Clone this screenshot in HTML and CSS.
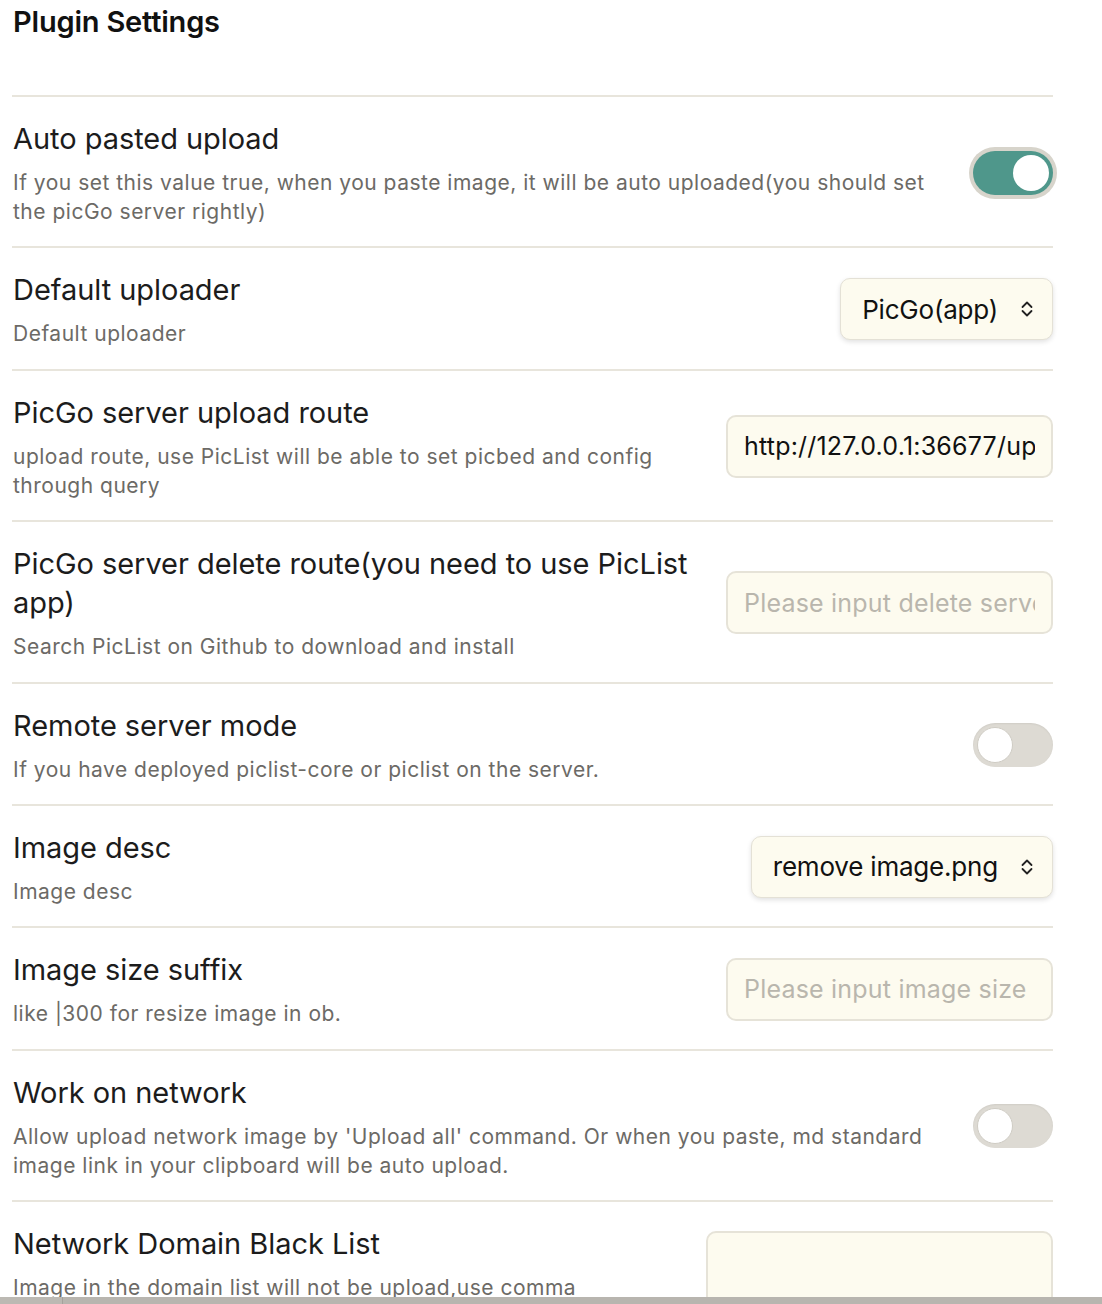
FILE: index.html
```html
<!DOCTYPE html>
<html>
<head>
<meta charset="utf-8">
<link rel="stylesheet" href="styles.css">
</head>
<body>
<div class="page">
  <h1 class="title">Plugin Settings</h1>

  <div class="setting">
    <div class="info">
      <div class="name">Auto pasted upload</div>
      <div class="desc">If you set this value true, when you paste image, it will be auto uploaded(you should set the picGo server rightly)</div>
    </div>
    <div class="control"><div class="toggle on"><span class="knob"></span></div></div>
  </div>

  <div class="setting">
    <div class="info">
      <div class="name">Default uploader</div>
      <div class="desc">Default uploader</div>
    </div>
    <div class="control">
      <div class="select"><span>PicGo(app)</span>
        <svg class="chev" width="14" height="20" viewBox="0 0 14 20"><path d="M2.5 8 L7 3.5 L11.5 8 M2.5 12 L7 16.5 L11.5 12" fill="none" stroke="#222" stroke-width="1.8" stroke-linecap="round" stroke-linejoin="round"/></svg>
      </div>
    </div>
  </div>

  <div class="setting">
    <div class="info">
      <div class="name">PicGo server upload route</div>
      <div class="desc">upload route, use PicList will be able to set picbed and config through query</div>
    </div>
    <div class="control"><input class="text" type="text" value="http://127.0.0.1:36677/upload"></div>
  </div>

  <div class="setting">
    <div class="info">
      <div class="name">PicGo server delete route(you need to use PicList app)</div>
      <div class="desc">Search PicList on Github to download and install</div>
    </div>
    <div class="control"><input class="text" type="text" placeholder="Please input delete server route"></div>
  </div>

  <div class="setting">
    <div class="info">
      <div class="name">Remote server mode</div>
      <div class="desc">If you have deployed piclist-core or piclist on the server.</div>
    </div>
    <div class="control"><div class="toggle"><span class="knob"></span></div></div>
  </div>

  <div class="setting">
    <div class="info">
      <div class="name">Image desc</div>
      <div class="desc">Image desc</div>
    </div>
    <div class="control">
      <div class="select"><span>remove image.png</span>
        <svg class="chev" width="14" height="20" viewBox="0 0 14 20"><path d="M2.5 8 L7 3.5 L11.5 8 M2.5 12 L7 16.5 L11.5 12" fill="none" stroke="#222" stroke-width="1.8" stroke-linecap="round" stroke-linejoin="round"/></svg>
      </div>
    </div>
  </div>

  <div class="setting">
    <div class="info">
      <div class="name">Image size suffix</div>
      <div class="desc">like |300 for resize image in ob.</div>
    </div>
    <div class="control"><input class="text" type="text" placeholder="Please input image size"></div>
  </div>

  <div class="setting">
    <div class="info">
      <div class="name">Work on network</div>
      <div class="desc">Allow upload network image by 'Upload all' command. Or when you paste, md standard image link in your clipboard will be auto upload.</div>
    </div>
    <div class="control"><div class="toggle"><span class="knob"></span></div></div>
  </div>

  <div class="setting">
    <div class="info">
      <div class="name">Network Domain Black List</div>
      <div class="desc">Image in the domain list will not be upload,use comma separated</div>
    </div>
    <div class="control"><textarea class="area"></textarea></div>
  </div>
</div>
<div class="statusbar"><span class="seg"></span></div>
</body>
</html>
```

FILE: styles.css
```css
html, body {
  margin: 0;
  padding: 0;
  background: #ffffff;
  overflow: hidden;
  height: 1304px;
}
body {
  font-family: "Inter", "Noto Sans", sans-serif;
  color: #1e1e1e;
}
.page {
  width: 1041px;
  margin-left: 12px;
}
.title {
  margin: 0;
  padding: 3px 0 0 1px;
  height: 95px;
  box-sizing: border-box;
  font-size: 29px;
  font-weight: 600;
  line-height: 37px;
  color: #111;
  letter-spacing: -0.2px;
}
.setting {
  display: flex;
  align-items: center;
  border-top: 2px solid #e8e5dc;
  padding: 22px 0 20.4px;
}
.info {
  flex: 1 1 auto;
  min-width: 0;
  padding-left: 1px;
}
.name {
  font-size: 29px;
  line-height: 39px;
  color: #1c1c1c;
  letter-spacing: -0.05px;
}
.desc {
  margin-top: 10px;
  font-size: 21px;
  line-height: 29px;
  color: #6c6a66;
  letter-spacing: 0.5px;
}
.control {
  flex: none;
  margin-left: 36px;
  display: flex;
  justify-content: flex-end;
}
.toggle {
  position: relative;
  width: 80px;
  height: 44px;
  border-radius: 22px;
  background: #dddad3;
  box-shadow: inset 0 1px 2px rgba(0,0,0,0.06);
}
.toggle .knob {
  position: absolute;
  top: 4px;
  left: 4px;
  width: 36px;
  height: 36px;
  border-radius: 50%;
  background: #fff;
  box-sizing: border-box;
  border: 1px solid #cfccc4;
}
.toggle.on {
  background: #4f978b;
  box-shadow: 0 0 0 4px #d7d4cb;
}
.toggle.on .knob {
  left: 40px;
  border: none;
}
.select {
  display: flex;
  align-items: center;
  height: 62px;
  box-sizing: border-box;
  padding: 0 18px 0 21px;
  background: #fdfbef;
  border: 1px solid #e4e1d6;
  border-radius: 10px;
  box-shadow: 0 2px 5px rgba(0,0,0,0.12);
  font-size: 26px;
  color: #111;
  letter-spacing: -0.2px;
}
.select .chev {
  margin-left: 22px;
}
.text {
  width: 327px;
  height: 63px;
  box-sizing: border-box;
  padding: 0 16px;
  background: #fdfbef;
  border: 2px solid #e6e3d8;
  border-radius: 10px;
  font-family: "Inter", "Noto Sans", sans-serif;
  font-size: 25px;
  color: #111;
  outline: none;
  letter-spacing: 0.2px;
}
.text::placeholder {
  color: #b9b6ad;
}
.area {
  display: block;
  width: 347px;
  height: 94px;
  box-sizing: border-box;
  background: #fdfbef;
  border: 2px solid #e6e3d8;
  border-radius: 10px;
  resize: none;
  outline: none;
}
.statusbar {
  position: fixed;
  left: 0;
  right: 0;
  bottom: 0;
  height: 7px;
  background: #b8b5af;
  display: flex;
}
.statusbar .seg {
  width: 62px;
  border-right: 1px solid #a5a29c;
  background: #bcb9b3;
}
```
